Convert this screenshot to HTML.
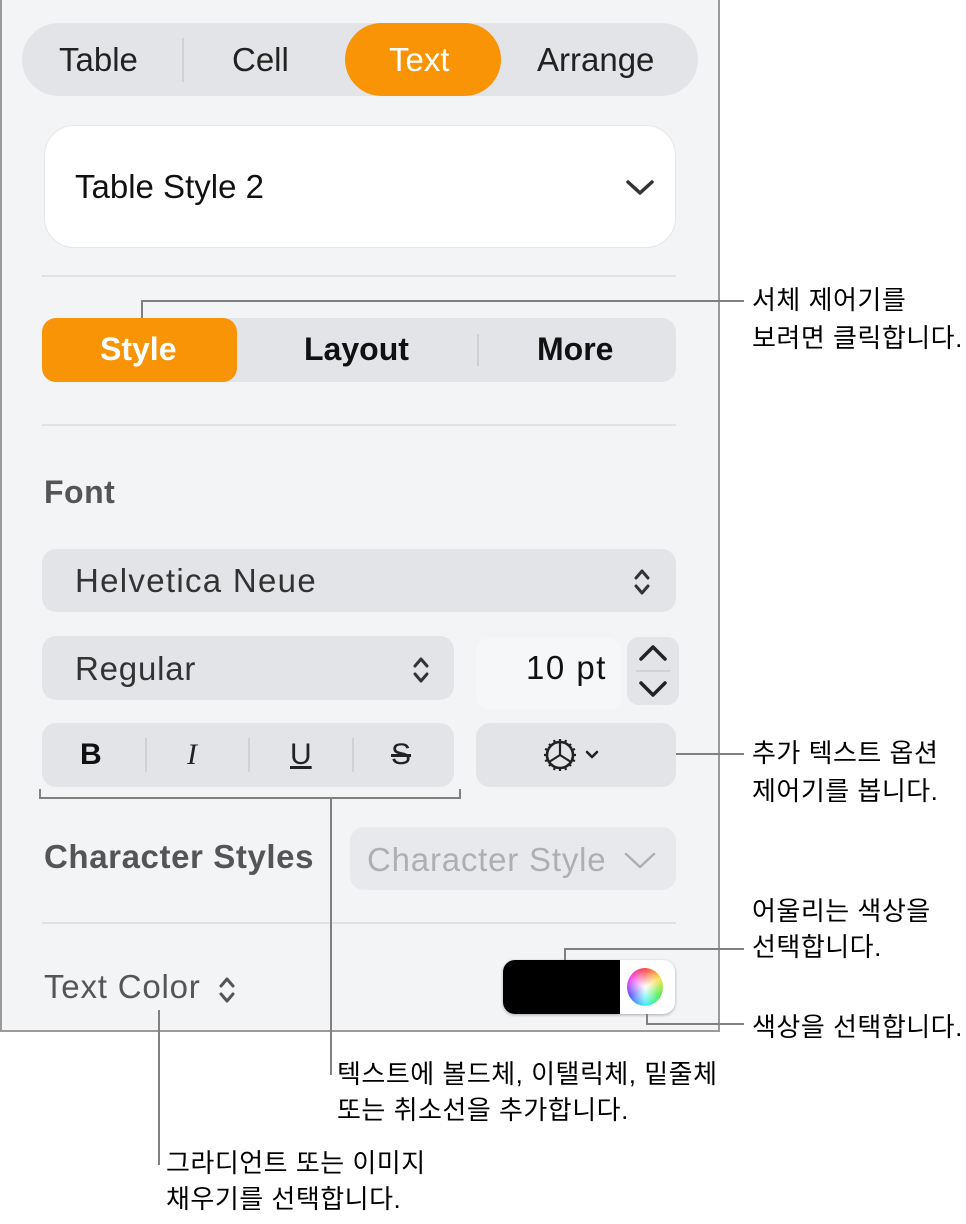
<!DOCTYPE html>
<html><head><meta charset="utf-8"><style>
body{margin:0;width:966px;height:1224px;background:#fff;position:relative;overflow:hidden;font-family:"Liberation Sans","Noto Sans CJK KR",sans-serif;}
.a{position:absolute;}
.panel{left:0;top:0;width:716px;height:1030px;border:2px solid #9a9a9a;border-top:none;background:#f3f4f6;box-sizing:content-box;}
.seg{background:#e3e4e8;}
.t{position:absolute;white-space:nowrap;}
.r{font-size:33px;letter-spacing:0.8px;}
.ln{position:absolute;background:#808080;}
.k{font-size:26px;letter-spacing:0.5px;color:#000;line-height:38px;white-space:nowrap;position:absolute;}
.sep{position:absolute;background:#e0e1e4;height:2px;}
</style></head><body>
<div class="a panel"></div>
<!-- top tabs -->
<div class="a seg" style="left:22px;top:23px;width:676px;height:73px;border-radius:37px;"></div>
<div class="a" style="left:345px;top:23px;width:156px;height:73px;border-radius:37px;background:#f89406;"></div>
<div class="a" style="left:182px;top:38px;width:2px;height:44px;background:#cfd0d4;"></div>
<div class="t" style="left:59px;top:41px;font-size:33px;color:#222;">Table</div>
<div class="t" style="left:232px;top:41px;font-size:33px;color:#222;">Cell</div>
<div class="t" style="left:389px;top:41px;font-size:33px;color:#fff;">Text</div>
<div class="t" style="left:537px;top:41px;font-size:33px;color:#222;">Arrange</div>
<!-- style box -->
<div class="a" style="left:44px;top:125px;width:630px;height:121px;border-radius:30px;background:#fff;border:1px solid #e6e6e8;"></div>
<div class="t" style="left:75px;top:168px;font-size:33px;color:#111;">Table Style 2</div>
<svg class="a" style="left:624px;top:178px" width="32" height="20"><path d="M4 4 L16 15 L28 4" fill="none" stroke="#333" stroke-width="3.5" stroke-linecap="round" stroke-linejoin="round"/></svg>
<div class="sep" style="left:42px;top:275px;width:634px;"></div>
<!-- style/layout/more -->
<div class="a seg" style="left:42px;top:318px;width:634px;height:64px;border-radius:14px;"></div>
<div class="a" style="left:42px;top:318px;width:195px;height:64px;border-radius:14px;background:#f89406;"></div>
<div class="a" style="left:477px;top:334px;width:2px;height:32px;background:#cfd0d4;"></div>
<div class="t" style="left:100px;top:331px;font-size:32px;color:#fff;font-weight:bold;">Style</div>
<div class="t" style="left:304px;top:331px;font-size:32px;color:#111;font-weight:bold;">Layout</div>
<div class="t" style="left:537px;top:331px;font-size:32px;color:#111;font-weight:bold;">More</div>
<div class="sep" style="left:42px;top:424px;width:634px;"></div>
<div class="t" style="left:44px;top:474px;font-size:32px;color:#555;font-weight:bold;letter-spacing:0.5px;">Font</div>
<!-- helvetica -->
<div class="a seg" style="left:42px;top:549px;width:634px;height:63px;border-radius:14px;"></div>
<div class="t r" style="left:75px;top:562px;color:#333;letter-spacing:1.3px;">Helvetica Neue</div>
<svg class="a" style="left:630px;top:566px" width="24" height="32"><path d="M6 12 L12 5 L18 12 M6 20 L12 27 L18 20" fill="none" stroke="#333" stroke-width="3" stroke-linecap="round" stroke-linejoin="round"/></svg>
<!-- regular -->
<div class="a seg" style="left:42px;top:636px;width:412px;height:64px;border-radius:14px;"></div>
<div class="t r" style="left:75px;top:650px;color:#333;">Regular</div>
<svg class="a" style="left:409px;top:654px" width="24" height="32"><path d="M6 12 L12 5 L18 12 M6 20 L12 27 L18 20" fill="none" stroke="#333" stroke-width="3" stroke-linecap="round" stroke-linejoin="round"/></svg>
<div class="a" style="left:476px;top:638px;width:146px;height:72px;border-radius:14px;background:#f6f7f8;"></div>
<div class="t r" style="left:526px;top:649px;color:#111;letter-spacing:1.5px;">10 pt</div>
<div class="a seg" style="left:627px;top:637px;width:52px;height:68px;border-radius:12px;"></div>
<div class="a" style="left:636px;top:670px;width:34px;height:2px;background:#d0d1d5;"></div>
<svg class="a" style="left:627px;top:637px" width="52" height="68"><path d="M14 22 L26 10 L38 22 M14 46 L26 58 L38 46" fill="none" stroke="#222" stroke-width="3.5" stroke-linecap="round" stroke-linejoin="round"/></svg>
<!-- BIUS -->
<div class="a seg" style="left:42px;top:723px;width:412px;height:64px;border-radius:14px;"></div>
<div class="a" style="left:145px;top:738px;width:2px;height:34px;background:#d0d1d5;"></div>
<div class="a" style="left:248px;top:738px;width:2px;height:34px;background:#d0d1d5;"></div>
<div class="a" style="left:352px;top:738px;width:2px;height:34px;background:#d0d1d5;"></div>
<div class="t" style="left:80px;top:738px;font-size:30px;color:#111;font-weight:bold;">B</div>
<div class="t" style="left:187px;top:738px;font-size:30px;color:#222;font-style:italic;font-family:'Liberation Serif',serif;">I</div>
<div class="t" style="left:290px;top:738px;font-size:30px;color:#222;text-decoration:underline;">U</div>
<div class="t" style="left:391px;top:738px;font-size:30px;color:#222;text-decoration:line-through;">S</div>
<!-- gear -->
<div class="a seg" style="left:476px;top:723px;width:200px;height:64px;border-radius:14px;"></div>
<svg class="a" style="left:541px;top:735px" width="70" height="40">
<g fill="none" stroke="#222" stroke-width="2.6">
<circle cx="19" cy="20" r="13"/>
<path d="M19 20 L19 7 M19 20 L8 27 M19 20 L30 27" stroke-width="2.2"/>
<path d="M19 4 L19 7 M19 33 L19 36 M3 20 L6 20 M32 20 L35 20 M8 9 L10 11 M28 29 L30 31 M30 9 L28 11 M8 31 L10 29 M13 5 L14 8 M25 5 L24 8 M13 35 L14 32 M25 35 L24 32 M4 14 L7 15 M4 26 L7 25 M34 14 L31 15 M34 26 L31 25" stroke-width="2.2"/>
<path d="M46 17 L51 22 L56 17" stroke-width="2.6" stroke-linecap="round" stroke-linejoin="round"/>
</g></svg>
<!-- char styles -->
<div class="t" style="left:44px;top:838px;font-size:33px;color:#555;font-weight:bold;letter-spacing:0.6px;">Character Styles</div>
<div class="a" style="left:350px;top:827px;width:326px;height:63px;border-radius:14px;background:#e8e9ec;"></div>
<div class="t r" style="left:367px;top:841px;color:#aeafb3;">Character Style</div>
<svg class="a" style="left:622px;top:850px" width="36" height="22"><path d="M4 4 L18 17 L32 4" fill="none" stroke="#aeafb3" stroke-width="2.5" stroke-linecap="round" stroke-linejoin="round"/></svg>
<div class="sep" style="left:42px;top:922px;width:634px;"></div>
<!-- text color -->
<div class="t r" style="left:44px;top:968px;color:#555;">Text Color</div>
<svg class="a" style="left:216px;top:974px" width="22" height="32"><path d="M5 12 L11 5 L17 12 M5 20 L11 27 L17 20" fill="none" stroke="#555" stroke-width="3" stroke-linecap="round" stroke-linejoin="round"/></svg>
<div class="a" style="left:503px;top:960px;width:172px;height:54px;border-radius:12px;background:#fff;box-shadow:0 1px 3px rgba(0,0,0,.3);overflow:hidden;">
<div class="a" style="left:0;top:0;width:117px;height:54px;background:#000;"></div>
</div>
<div class="a" style="left:627px;top:968px;width:36px;height:38px;border-radius:50%;background:radial-gradient(circle,#fff 0%,rgba(255,255,255,0) 70%),conic-gradient(#f44,#fd4,#4e4,#4ef,#55f,#e4e,#f44);"></div>
<!-- callout lines -->
<div class="ln" style="left:141px;top:300px;width:2px;height:18px;"></div>
<div class="ln" style="left:141px;top:300px;width:603px;height:2px;"></div>
<div class="ln" style="left:676px;top:753px;width:68px;height:2px;"></div>
<div class="ln" style="left:564px;top:948px;width:2px;height:12px;"></div>
<div class="ln" style="left:564px;top:948px;width:180px;height:2px;"></div>
<div class="ln" style="left:646px;top:1014px;width:2px;height:11px;"></div>
<div class="ln" style="left:646px;top:1023px;width:98px;height:2px;"></div>
<div class="ln" style="left:39px;top:797px;width:422px;height:2px;"></div>
<div class="ln" style="left:39px;top:789px;width:2px;height:10px;"></div>
<div class="ln" style="left:459px;top:789px;width:2px;height:10px;"></div>
<div class="ln" style="left:330px;top:797px;width:2px;height:278px;"></div>
<div class="ln" style="left:158px;top:1010px;width:2px;height:155px;"></div>
<!-- callout text -->
<div class="k" style="left:752px;top:281px;">서체 제어기를<br>보려면 클릭합니다.</div>
<div class="k" style="left:752px;top:734px;">추가 텍스트 옵션<br>제어기를 봅니다.</div>
<div class="k" style="left:752px;top:893px;line-height:36px;">어울리는 색상을<br>선택합니다.</div>
<div class="k" style="left:752px;top:1008px;">색상을 선택합니다.</div>
<div class="k" style="left:337px;top:1056px;line-height:36px;">텍스트에 볼드체, 이탤릭체, 밑줄체<br>또는 취소선을 추가합니다.</div>
<div class="k" style="left:166px;top:1145px;line-height:36px;">그라디언트 또는 이미지<br>채우기를 선택합니다.</div>
</body></html>
